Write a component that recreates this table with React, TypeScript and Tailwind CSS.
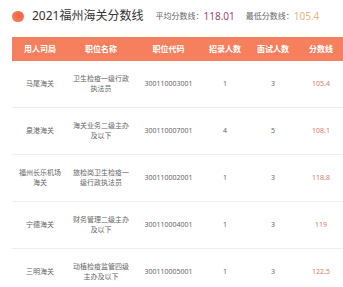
const FONT = { fontFamily: '"Noto Sans", "Noto Sans CJK SC", sans-serif' }

interface Row {
  dept: string[]
  post: string[]
  code: string
  hire: number
  interview: number
  score: string
}

const ROWS: Row[] = [
  { dept: ['马尾海关'], post: ['卫生检疫一级行政', '执法员'], code: '300110003001', hire: 1, interview: 3, score: '105.4' },
  { dept: ['泉港海关'], post: ['海关业务二级主办', '及以下'], code: '300110007001', hire: 4, interview: 5, score: '108.1' },
  { dept: ['福州长乐机场', '海关'], post: ['旅检岗卫生检疫一', '级行政执法员'], code: '300110002001', hire: 1, interview: 3, score: '118.8' },
  { dept: ['宁德海关'], post: ['财务管理二级主办', '及以下'], code: '300110004001', hire: 1, interview: 3, score: '119' },
  { dept: ['三明海关'], post: ['动植检疫监管四级', '主办及以下'], code: '300110005001', hire: 1, interview: 3, score: '122.5' },
]

const COLS = 'grid grid-cols-[56px_66px_69px_44px_52px_44px]'

function Lines({ lines }: { lines: string[] }) {
  return (
    <div className="flex flex-col items-center leading-[10px]">
      {lines.map(l => <span key={l}>{l}</span>)}
    </div>
  )
}

export default function App() {
  return (
    <div className="w-[343px] h-[287px] bg-white overflow-hidden" style={FONT}>
      <div className="flex items-center h-[32px] pl-3">
        <span className="w-[12px] h-[11px] rounded-full bg-[radial-gradient(circle_at_60%_40%,#f0603e,#f58a6e)]" />
        <span className="ml-2 text-[12px] text-[#333]">2021福州海关分数线</span>
        <span className="ml-[12px] text-[8px] text-[#666]">平均分数线：</span>
        <span className="text-[10px] text-[#a04870]">118.01</span>
        <span className="ml-[11px] text-[8px] text-[#666]">最低分数线：</span>
        <span className="text-[10px] text-[#e6b87c]">105.4</span>
      </div>

      <div className="ml-3 mt-[5px]">
        <div className={`${COLS} h-[24px] items-center bg-[#f67f5e] text-white text-[8px] font-bold`}>
          <span className="text-center">用人司局</span>
          <span className="text-center">职位名称</span>
          <span className="text-center">职位代码</span>
          <span className="text-center">招录人数</span>
          <span className="text-center">面试人数</span>
          <span className="text-center">分数线</span>
        </div>
        {ROWS.map(r => (
          <div key={r.code} className={`${COLS} h-[47px] items-center border-b border-[#eeeeee] text-[7px] text-[#666]`}>
            <Lines lines={r.dept} />
            <Lines lines={r.post} />
            <span className="text-center">{r.code}</span>
            <span className="text-center">{r.hire}</span>
            <span className="text-center">{r.interview}</span>
            <span className="text-center text-[#e07868]">{r.score}</span>
          </div>
        ))}
      </div>
    </div>
  )
}
